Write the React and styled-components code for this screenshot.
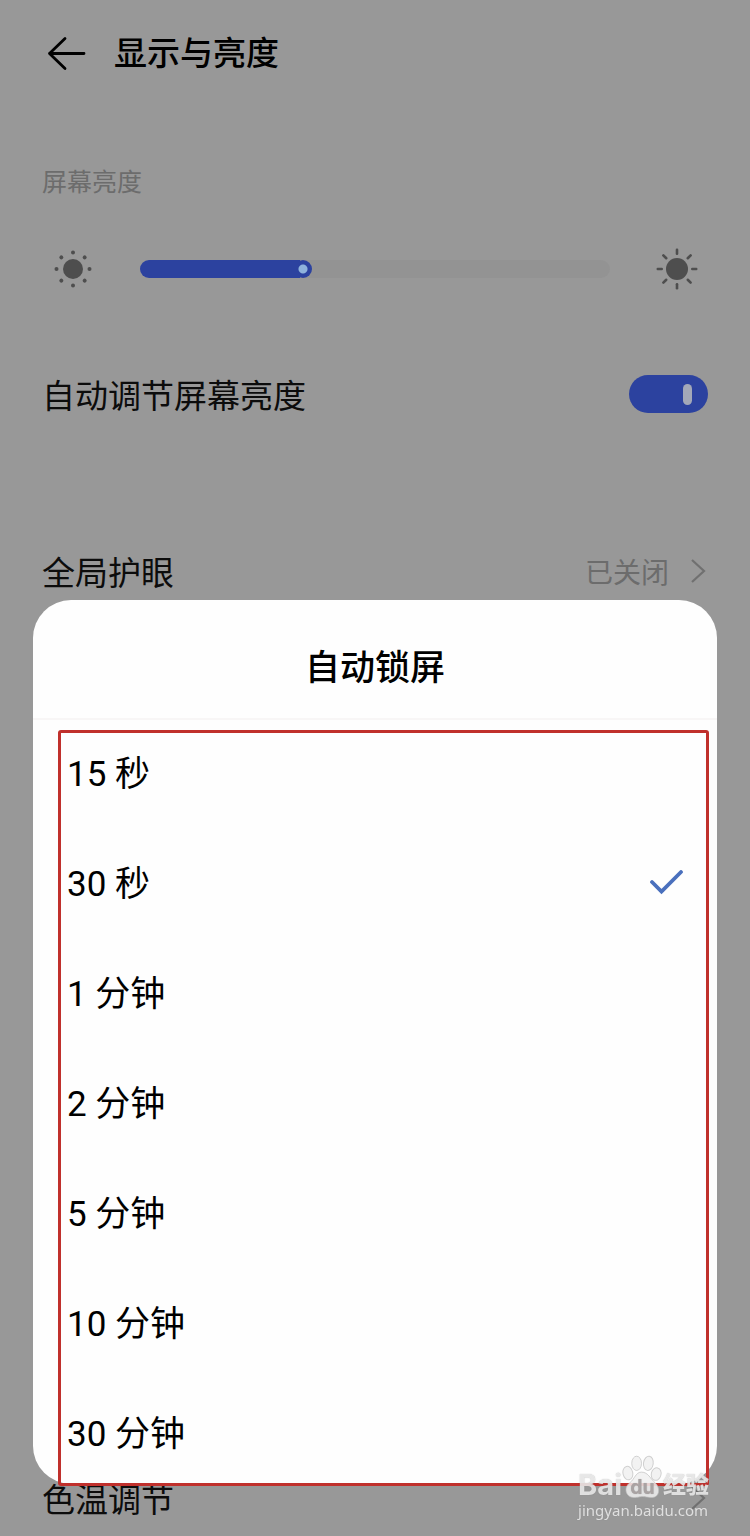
import React, { useState } from 'react';
import styled, { createGlobalStyle } from 'styled-components';

const GlobalStyle = createGlobalStyle`
  * {
    box-sizing: border-box;
  }
  body {
    margin: 0;
    background: #989898;
    color: #0c0c0c;
    font-family: Inter, 'Noto Sans CJK SC', sans-serif;
  }
  button, input {
    font: inherit;
    color: inherit;
    margin: 0;
  }
`;

const Page = styled.div`
  min-height: 100vh;
  display: flex;
  flex-direction: column;
  padding: 0 42px 8px;
`;

const Header = styled.header`
  height: 106px;
  display: flex;
  align-items: center;
  gap: 24px;

  h1 {
    margin: 0;
    font-size: 33px;
    font-weight: 500;
    line-height: 44px;
    color: #000;
  }
`;

const BackButton = styled.button`
  width: 48px;
  height: 48px;
  padding: 0;
  border: none;
  background: none;
  cursor: pointer;

  svg {
    display: block;
  }
`;

const SectionLabel = styled.label`
  margin-top: 58px;
  font-size: 25px;
  line-height: 36px;
  color: #6c6c6c;
`;

const SliderRow = styled.div`
  margin-top: 48px;
  padding: 0 10px;
  display: flex;
  align-items: center;
  gap: 46px;
`;

const Slider = styled.input`
  flex: 1;
  min-width: 0;
  height: 18px;
  appearance: none;
  border-radius: 9px;
  cursor: pointer;

  &::-webkit-slider-thumb {
    appearance: none;
    width: 18px;
    height: 18px;
    border-radius: 50%;
    background: radial-gradient(circle, #8fb3dc 4px, #2c429f 5px);
  }
`;

const Row = styled.div`
  height: 60px;
  margin-top: ${({ $gap }) => $gap};
  display: flex;
  flex-shrink: 0;
  align-items: center;
  justify-content: space-between;
  font-size: 33px;
`;

const Switch = styled.input`
  appearance: none;
  width: 79px;
  height: 38px;
  border-radius: 19px;
  display: flex;
  align-items: center;
  justify-content: ${({ checked }) => (checked ? 'flex-end' : 'flex-start')};
  padding: 0 16px;
  background: ${({ checked }) => (checked ? '#2c429f' : '#777')};
  cursor: pointer;

  &::before {
    content: '';
    width: 9px;
    height: 21px;
    border-radius: 5px;
    background: #a3a8b8;
  }
`;

const RowLink = styled.a`
  display: flex;
  align-items: center;
  gap: 20px;
  font-size: 28px;
  color: #6c6c6c;
  text-decoration: none;
`;

const Overlay = styled.div`
  position: fixed;
  inset: 0;
  display: flex;
  align-items: flex-end;
  padding: 0 33px 52px;
`;

const Sheet = styled.section`
  flex: 1;
  border-radius: 38px;
  background: #fefefe;

  h2 {
    margin: 0;
    padding: 42px 0;
    border-bottom: 2px solid #f8f6f6;
    font-size: 35px;
    line-height: 50px;
    height: 120px;
    font-weight: 500;
    text-align: center;
    color: #000;
  }
`;

const Options = styled.div`
  margin: 10px 8px -2px 25px;
  padding: 23px 22px 29px 6px;
  display: flex;
  flex-direction: column;
  gap: 72px;
  border: 3px solid #c0302c;
  border-radius: 3px;
`;

const Option = styled.label`
  height: 38px;
  display: flex;
  align-items: center;
  justify-content: space-between;
  font-family: Roboto, 'Noto Sans CJK SC', sans-serif;
  font-size: 35px;
  line-height: 38px;
  color: #000;
  cursor: pointer;

  input {
    position: absolute;
    opacity: 0;
  }
`;

const Watermark = styled.div`
  position: fixed;
  right: 41px;
  bottom: 15px;
  color: rgba(238, 238, 238, 0.85);
  text-shadow: 0 0 1px rgba(120, 120, 120, 0.5);
`;

const Brand = styled.div`
  height: 44px;
  display: flex;
  align-items: flex-end;
  font-size: 29px;
  line-height: 28px;
  font-weight: 700;

  b {
    font-size: 23px;
  }
`;

const SiteName = styled.div`
  font-family: 'Noto Sans', sans-serif;
  font-size: 15px;
  line-height: 22px;
`;

const angles = [0, 45, 90, 135, 180, 225, 270, 315];

function DimIcon() {
  return (
    <svg width="42" height="42" viewBox="-21 -21 42 42" fill="#4e4e4e" aria-hidden="true">
      <circle r="10" />
      {angles.map((a) => <circle key={a} cy="-16.5" r="2" transform={`rotate(${a})`} />)}
    </svg>
  );
}

function BrightIcon() {
  return (
    <svg width="42" height="42" viewBox="-21 -21 42 42" fill="#4e4e4e" aria-hidden="true">
      <circle r="11" />
      {angles.map((a) => (
        <rect key={a} x="-1.3" y="-20.5" width="2.6" height="6.5" rx="1.2" transform={`rotate(${a})`} />
      ))}
    </svg>
  );
}

function Chevron() {
  return (
    <svg width="19" height="28" viewBox="0 0 19 28" fill="none" stroke="#707070" strokeWidth="2.2" aria-hidden="true">
      <path d="M3 3 L15 14 L3 25" />
    </svg>
  );
}

function Paw() {
  return (
    <svg width="41" height="44" viewBox="0 0 42 44" fill="rgba(240,240,240,.85)" stroke="rgba(190,190,190,.7)" strokeWidth="1">
      <ellipse cx="6" cy="18" rx="5" ry="7" transform="rotate(-12 6 18)" />
      <ellipse cx="15" cy="8" rx="5" ry="7.3" />
      <ellipse cx="27" cy="8" rx="5" ry="7.3" transform="rotate(8 27 8)" />
      <ellipse cx="35" cy="19" rx="5" ry="6.5" transform="rotate(14 35 19)" />
      <path d="M20 17 C14 17 13 24 8 28 C1 33 4 43 12 43 C17 43 18 42 21 42 C24 42 26 43 31 43 C38 43 40 34 34 28 C29 24 27 17 20 17 Z" />
      <text x="21" y="39" textAnchor="middle" fontSize="20" fontWeight="700" fill="#a9a3a3" stroke="none">du</text>
    </svg>
  );
}

const timeouts = ['15 秒', '30 秒', '1 分钟', '2 分钟', '5 分钟', '10 分钟', '30 分钟'];

export default function App() {
  const [brightness, setBrightness] = useState(34);
  const [auto, setAuto] = useState(true);
  const [timeout, setTimeoutValue] = useState('30 秒');

  return (
    <>
      <GlobalStyle />
      <Page>
        <Header>
          <BackButton type="button" aria-label="返回">
            <svg width="48" height="48" viewBox="0 0 48 48" fill="none" stroke="#000" strokeWidth="2.8" strokeLinecap="round" strokeLinejoin="round">
              <path d="M23 9.5 L7.5 24.5 L23 39.5 M7.5 24.5 H42" />
            </svg>
          </BackButton>
          <h1>显示与亮度</h1>
        </Header>

        <SectionLabel htmlFor="brightness">屏幕亮度</SectionLabel>
        <SliderRow>
          <DimIcon />
          <Slider
            id="brightness"
            type="range"
            value={brightness}
            onChange={(e) => setBrightness(Number(e.target.value))}
            style={{ background: `linear-gradient(to right, #2c429f ${brightness}%, #939393 ${brightness}%)` }}
          />
          <BrightIcon />
        </SliderRow>

        <Row $gap="74px">
          <label htmlFor="auto">自动调节屏幕亮度</label>
          <Switch
            id="auto"
            type="checkbox"
            role="switch"
            checked={auto}
            onChange={(e) => setAuto(e.target.checked)}
          />
        </Row>
        <Row $gap="117px">
          <span>全局护眼</span>
          <RowLink href="#eye">
            已关闭
            <Chevron />
          </RowLink>
        </Row>
        <Row $gap="auto">
          <span>色温调节</span>
          <RowLink href="#temperature" aria-label="色温调节">
            <Chevron />
          </RowLink>
        </Row>
      </Page>

      <Overlay>
        <Sheet role="dialog" aria-labelledby="sheet-title">
          <h2 id="sheet-title">自动锁屏</h2>
          <Options role="radiogroup" aria-labelledby="sheet-title">
            {timeouts.map((item) => (
              <Option key={item}>
                <input
                  type="radio"
                  name="timeout"
                  checked={timeout === item}
                  onChange={() => setTimeoutValue(item)}
                />
                <span>{item}</span>
                {timeout === item && (
                  <svg width="36" height="30" viewBox="0 0 36 30" fill="none" stroke="#4a70bd" strokeWidth="3.8" strokeLinecap="round" aria-hidden="true">
                    <path d="M4 12 L13.5 21.5 L33 2" />
                  </svg>
                )}
              </Option>
            ))}
          </Options>
        </Sheet>
      </Overlay>

      <Watermark>
        <Brand>
          <span>Bai</span>
          <Paw />
          <b>经验</b>
        </Brand>
        <SiteName>jingyan.baidu.com</SiteName>
      </Watermark>
    </>
  );
}
